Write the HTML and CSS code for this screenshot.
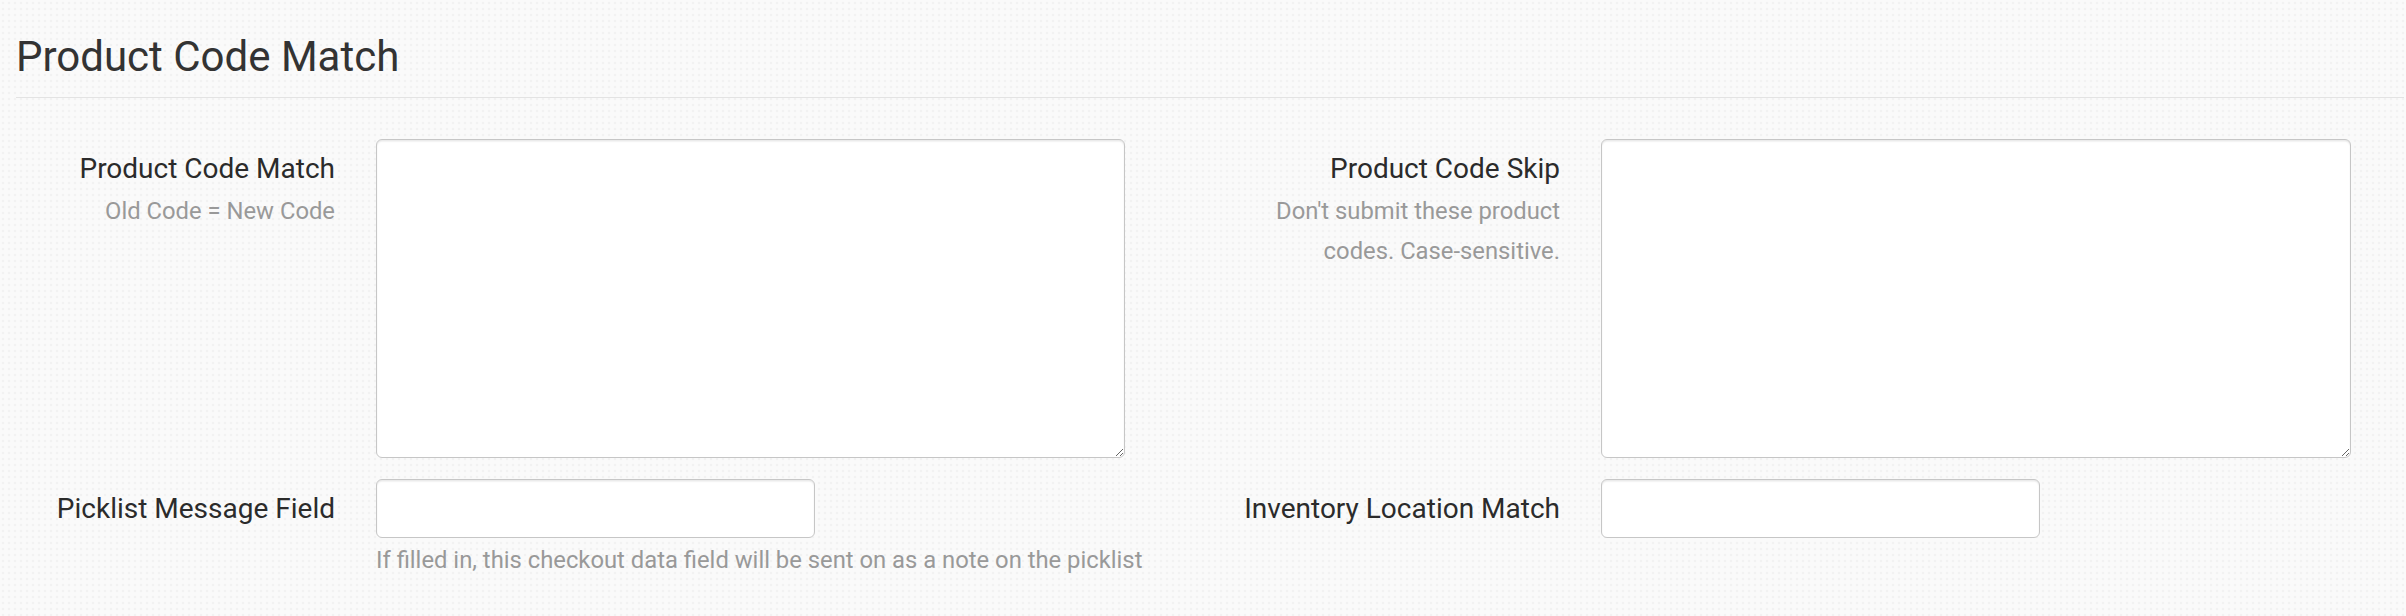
FILE: index.html
```html
<!DOCTYPE html>
<html lang="en">
<head>
<meta charset="utf-8">
<title>Product Code Match</title>
<link rel="stylesheet" href="styles.css">
</head>
<body>
<div class="page">
  <header class="section-head">
    <h1 class="section-title">Product Code Match</h1>
  </header>
  <div class="halves">
    <div class="half">
      <div class="label-cell">
        <label class="field-label" for="pcm">Product Code Match</label>
        <div class="field-hint">Old Code = New Code</div>
      </div>
      <div class="control-cell">
        <textarea id="pcm" class="textarea"></textarea>
      </div>
      <div class="label-cell">
        <label class="field-label" for="pmf">Picklist Message Field</label>
      </div>
      <div class="control-cell">
        <input id="pmf" class="text-input" type="text">
        <div class="help">If filled in, this checkout data field will be sent on as a note on the picklist</div>
      </div>
    </div>
    <div class="half">
      <div class="label-cell">
        <label class="field-label" for="pcs">Product Code Skip</label>
        <div class="field-hint">Don't submit these product codes. Case-sensitive.</div>
      </div>
      <div class="control-cell">
        <textarea id="pcs" class="textarea"></textarea>
      </div>
      <div class="label-cell">
        <label class="field-label" for="ilm">Inventory Location Match</label>
      </div>
      <div class="control-cell">
        <input id="ilm" class="text-input" type="text">
      </div>
    </div>
  </div>
</div>
</body>
</html>
```
FILE: styles.css
```css
html, body {
  margin: 0;
  padding: 0;
}
body {
  width: 2406px;
  height: 616px;
  overflow: hidden;
  font-family: Roboto, "Liberation Sans", Arial, sans-serif;
  color: #333;
  background-color: #fafafa;
  background-image: radial-gradient(circle, #f2f2f2 1.4px, transparent 1.6px);
  background-size: 6px 6px;
}
.page {
  padding: 34px 2px 0 16px;
}
.section-head {
  border-bottom: 1.5px solid #e3e3e3;
  padding-bottom: 17px;
}
.section-title {
  margin: 0;
  font-size: 42px;
  font-weight: 400;
  line-height: 1.1;
  color: #333;
}
.halves {
  margin-top: 41px;
  display: grid;
  grid-template-columns: 1109px 1110px;
  column-gap: 116px;
  align-items: start;
}
.half {
  display: grid;
  grid-template-columns: 319px minmax(0, 1fr);
  column-gap: 41px;
  row-gap: 21px;
  align-items: start;
  align-content: start;
}
.label-cell {
  text-align: right;
  padding-top: 9.5px;
}
.field-label {
  display: block;
  font-size: 28px;
  line-height: 40px;
  color: #2b2b2b;
}
.field-hint {
  margin-top: 2px;
  font-size: 23.8px;
  line-height: 40px;
  color: #999;
}
.control-cell {
  display: flex;
  flex-direction: column;
  min-width: 0;
}
.textarea,
.text-input {
  box-sizing: border-box;
  border: 1.5px solid #c6c6c6;
  border-radius: 6px;
  background: #fff;
  box-shadow: inset 0 1.5px 1.5px rgba(0, 0, 0, 0.09);
  font-family: inherit;
  font-size: 21px;
  margin: 0;
  outline: none;
}
.textarea {
  width: 100%;
  height: 319px;
  resize: vertical;
}
.text-input {
  width: 439px;
  height: 59px;
  padding: 0 18px;
}
.help {
  margin-top: 2px;
  font-size: 23.8px;
  line-height: 40px;
  color: #999;
  white-space: nowrap;
}
```
